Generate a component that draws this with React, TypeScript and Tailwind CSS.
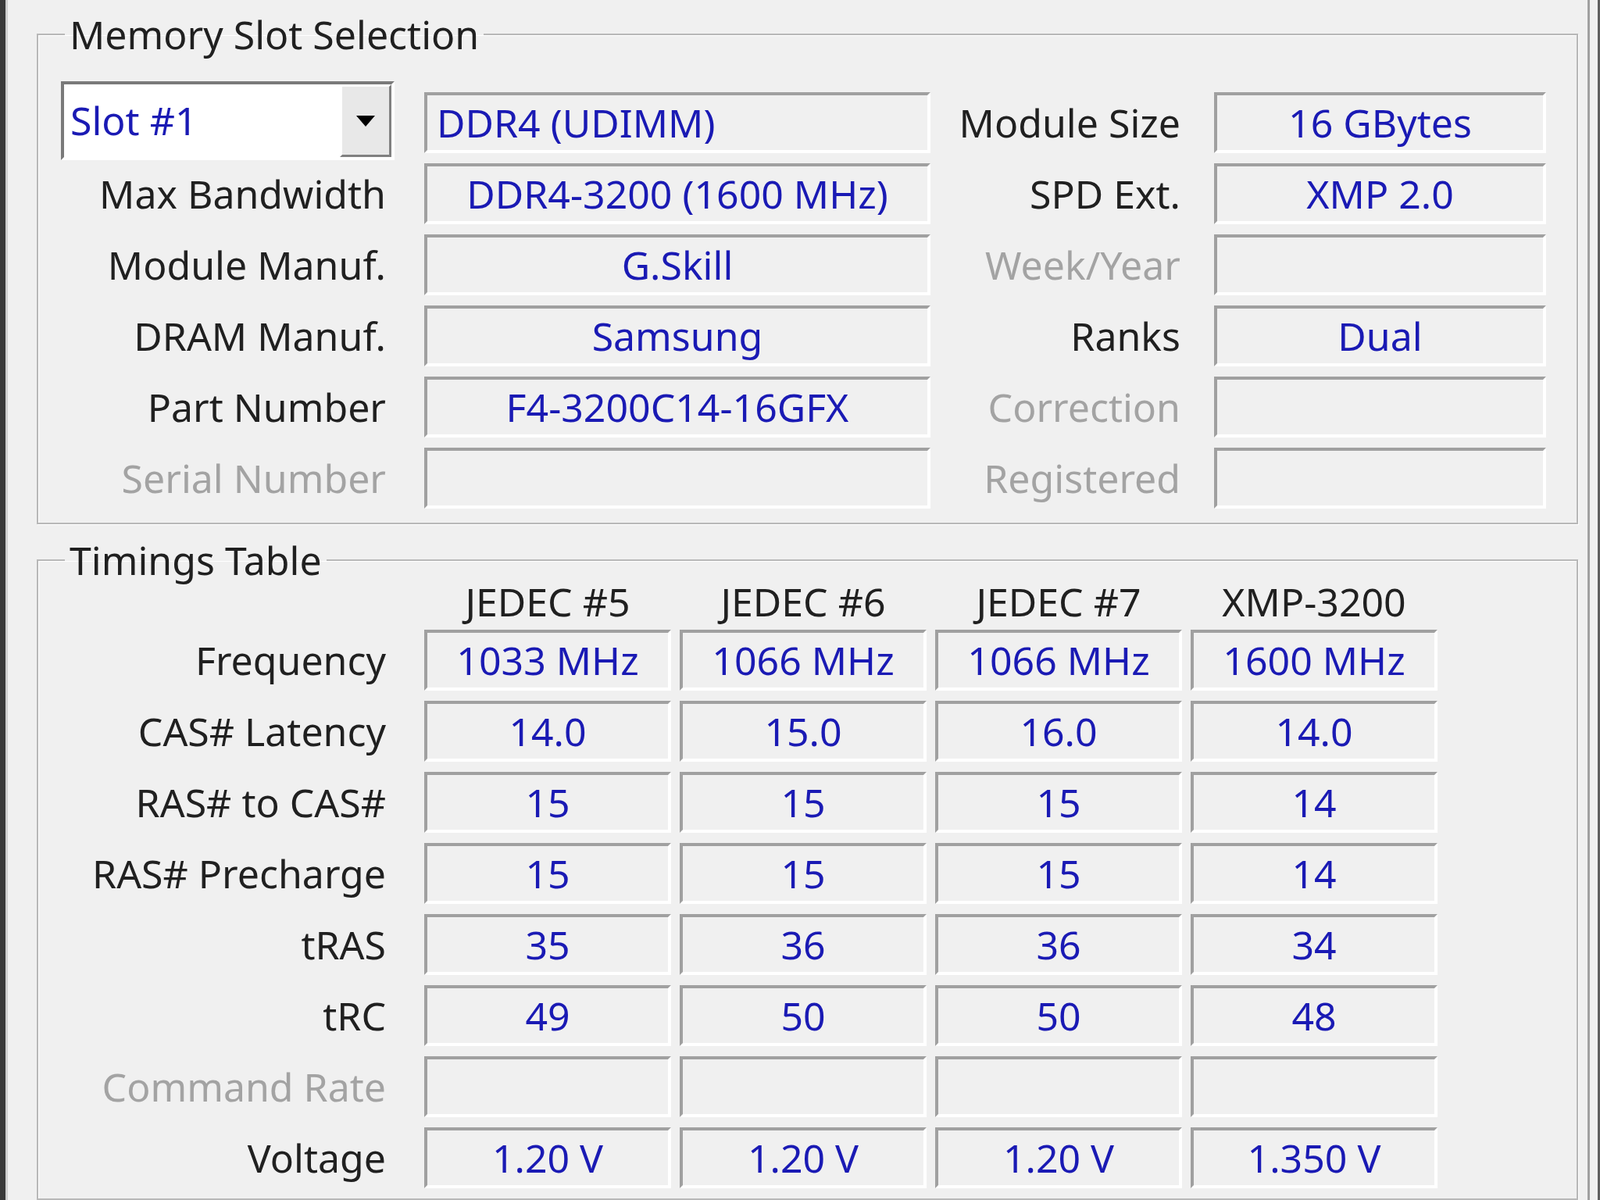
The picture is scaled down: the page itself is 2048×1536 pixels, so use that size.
import React from "react";

const F = "font-['DejaVu_Sans_Condensed','DejaVu_Sans',sans-serif] font-stretch-condensed";

function Field({ v, className = "" }: { v?: string; className?: string }) {
  return (
    <div className={`h-[78px] flex items-center justify-center bg-[#f0f0f0] border-t-[4px] border-l-[4px] border-r-[4px] border-b-[4px] border-t-[#a0a0a0] border-l-[#a0a0a0] border-r-white border-b-white text-[#1a1ab4] text-[50px] leading-none ${className}`}>
      {v}
    </div>
  );
}

function Label({ t, dim }: { t: string; dim?: boolean }) {
  return (
    <div className={`h-[78px] flex items-center justify-end whitespace-nowrap text-[50px] leading-none ${dim ? "text-[#a3a3a3]" : "text-[#202020]"}`}>
      {t}
    </div>
  );
}

export default function App() {
  const rows1: [string, string, boolean, string, string, boolean][] = [
    ["Max Bandwidth", "DDR4-3200 (1600 MHz)", false, "SPD Ext.", "XMP 2.0", false],
    ["Module Manuf.", "G.Skill", false, "Week/Year", "", true],
    ["DRAM Manuf.", "Samsung", false, "Ranks", "Dual", false],
    ["Part Number", "F4-3200C14-16GFX", false, "Correction", "", true],
    ["Serial Number", "", true, "Registered", "", true],
  ];
  const timings: [string, string[], boolean][] = [
    ["Frequency", ["1033 MHz", "1066 MHz", "1066 MHz", "1600 MHz"], false],
    ["CAS# Latency", ["14.0", "15.0", "16.0", "14.0"], false],
    ["RAS# to CAS#", ["15", "15", "15", "14"], false],
    ["RAS# Precharge", ["15", "15", "15", "14"], false],
    ["tRAS", ["35", "36", "36", "34"], false],
    ["tRC", ["49", "50", "50", "48"], false],
    ["Command Rate", ["", "", "", ""], true],
    ["Voltage", ["1.20 V", "1.20 V", "1.20 V", "1.350 V"], false],
  ];
  return (
    <div className={`w-[2048px] h-[1536px] overflow-hidden bg-[#f0f0f0] flex ${F}`}>
      <div className="w-[7px] bg-[#3a3a3a]" />
      <div className="w-[3px] bg-[#d0d0d0]" />
      <div className="flex-1 flex flex-col pl-[37px] pr-[12px]">
        <fieldset className="mt-[14px] border-[2px] border-[#b8b8b8] shadow-[inset_1px_1px_0_white,1px_1px_0_white] h-[696px] pl-0 pr-[20px]">
          <legend className="ml-[34px] px-[6px] text-[50px] leading-[60px] text-[#202020]">Memory Slot Selection</legend>
          <div className="grid grid-cols-[445px_697px_320px_468px] gap-x-0 gap-y-[13px] mt-[44px]">
            <div className="h-[78px] relative">
              <div className="absolute left-[29px] top-[-14px] w-[427px] h-[101px] border-[4px] border-t-[#7a7a7a] border-l-[#7a7a7a] border-b-white border-r-white bg-white flex">
                <div className="flex-1 flex items-center pl-[8px] text-[50px] text-[#1a1ab4]">Slot #1</div>
                <div className="w-[66px] bg-[#e8e8e8] border-[3px] border-t-white border-l-white border-b-[#808080] border-r-[#808080] flex items-center justify-center">
                  <svg width="24" height="14" viewBox="0 0 24 14"><path d="M0 0H24L12 14Z" fill="#000" /></svg>
                </div>
              </div>
            </div>
            <div className="pl-[49px]"><Field v="DDR4 (UDIMM)" className="!justify-start pl-[12px]" /></div>
            <Label t="Module Size" />
            <div className="pl-[43px]"><Field v="16 GBytes" /></div>
            {rows1.map(([l, v, d, l2, v2, d2]) => (
              <React.Fragment key={l}>
                <Label t={l} dim={d} />
                <div className="pl-[49px]"><Field v={v} /></div>
                <Label t={l2} dim={d2} />
                <div className="pl-[43px]"><Field v={v2} /></div>
              </React.Fragment>
            ))}
          </div>
        </fieldset>
        <fieldset className="mt-[16px] border-[2px] border-[#b8b8b8] shadow-[inset_1px_1px_0_white,1px_1px_0_white] h-[900px] pl-0">
          <legend className="ml-[34px] px-[6px] text-[50px] leading-[60px] text-[#202020]">Timings Table</legend>
          <div className="grid grid-cols-[445px_354px_316px_316px_316px] gap-x-[11px] gap-y-[13px]">
            <div className="h-[46px]" />
            {["JEDEC #5", "JEDEC #6", "JEDEC #7", "XMP-3200"].map((h, i) => (
              <div key={h} className={`h-[46px] flex items-center justify-center text-[50px] leading-none text-[#202020] ${i === 0 ? "ml-[38px]" : ""}`}>{h}</div>
            ))}
            {timings.map(([l, vs, d]) => (
              <React.Fragment key={l}>
                <Label t={l} dim={d} />
                {vs.map((v, i) => (
                  <div key={i} className={i === 0 ? "ml-[38px]" : ""}><Field v={v} /></div>
                ))}
              </React.Fragment>
            ))}
          </div>
        </fieldset>
      </div>
      <div className="w-[3px] bg-[#a0a0a0]" />
      <div className="w-[10px]" />
      <div className="w-[3px] bg-[#606060]" />
    </div>
  );
}
